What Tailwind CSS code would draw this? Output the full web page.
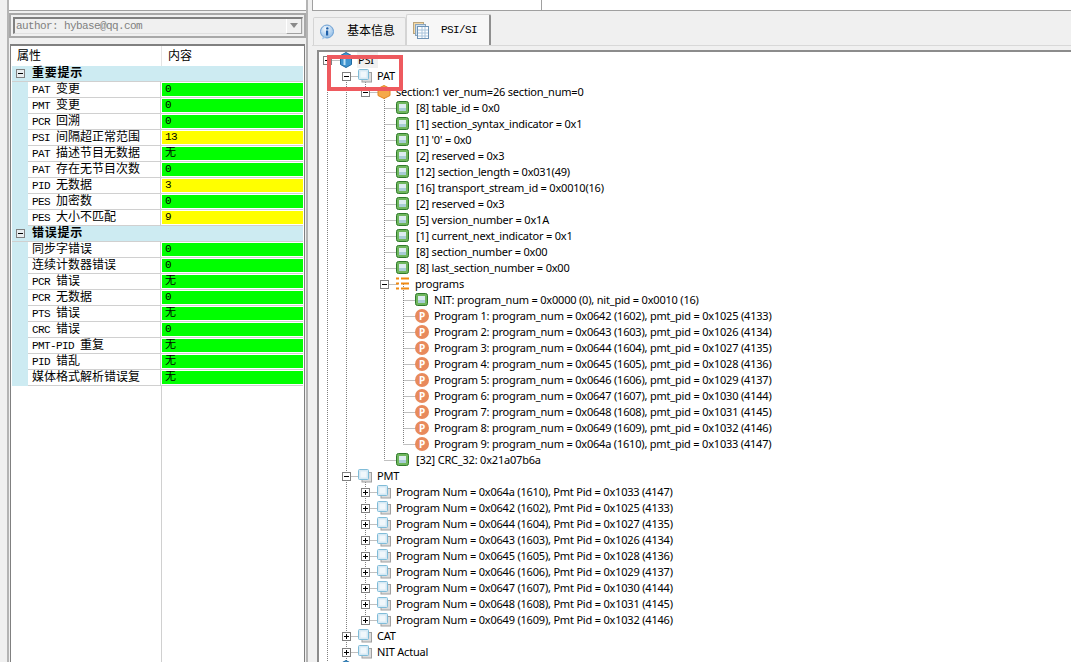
<!DOCTYPE html>
<html lang="zh">
<head>
    <meta charset="UTF-8">
    <title>PSI/SI</title>
    <script src="https://cdn.jsdelivr.net/npm/@tailwindcss/browser@4"></script>
</head>
<body class="bg-[#f0f0f0] overflow-hidden">
    <div class="flex w-[1071px] h-[662px] overflow-hidden font-['Liberation_Mono','Noto_Sans_CJK_SC',monospace] text-xs text-black">
        <!-- Left panel -->
        <aside class="ml-[7px] w-[301px] h-full flex flex-col border-x-2 border-[#b4b4b4]">
            <div class="h-[11px] bg-white border-b border-[#a0a0a0]"></div>
            <div class="mt-[2px] h-[25px] border-2 border-[#a8a8a8] p-[2px] pr-[1px]">
                <div class="flex h-[17px] items-center border border-t-2 border-l-2 border-[#808080] border-b-[#e0e0e0] border-r-[#e0e0e0] bg-[#f0f0f0] pl-[1px]">
                    <span class="flex-1 text-[11px] tracking-[-0.6px] text-[#808080]">author: hybase@qq.com</span>
                    <span class="flex items-center justify-center w-4 h-[15px] bg-[#f0f0f0] border-r border-b border-[#a0a0a0] border-l border-l-white">
                        <svg width="8" height="5" viewBox="0 0 8 5"><path d="M0 0h8L4 5z" fill="#8a8a8a"/></svg>
                    </span>
                </div>
            </div>
            <div class="mt-[6px] mx-[1px] flex-1 flex flex-col bg-white border-t-2 border-x border-[#808080] overflow-hidden">
                <div class="flex h-[20px] items-center">
                    <div class="w-[151px] pl-[6px] pt-[2px] h-full flex items-center border-r border-[#e4e4e4]">属性</div>
                    <div class="pl-[6px] pt-[2px]">内容</div>
                </div>
                <div id="props"></div>
                <div class="flex-1 ml-[150px] w-0 border-r border-[#d0d0d0]"></div>
            </div>
        </aside>

        <!-- Right panel -->
        <main class="ml-[4px] flex-1 flex flex-col min-w-0">
            <div class="h-[11px] flex bg-white border-b border-[#a0a0a0] border-l">
                <div class="w-[229px] border-r border-[#a0a0a0]"></div>
            </div>
            <div class="h-[34px] flex items-end pl-[1px]">
                <div class="flex items-center w-[93px] h-[28px] bg-[#f0f0f0] border border-b-0 border-[#d4d4d4] rounded-t-[2px] pl-[5px]">
                    <svg width="16" height="16" viewBox="0 0 16 16"><defs><radialGradient id="info" cx="0.4" cy="0.3" r="0.8"><stop offset="0" stop-color="#f2f8fd"/><stop offset="1" stop-color="#86b6e4"/></radialGradient></defs><circle cx="8" cy="7.5" r="6.5" fill="url(#info)" stroke="#6a9fd4"/><path d="M4 12.5l-1 3 4-2z" fill="#9cc3e8"/><circle cx="8.3" cy="4.4" r="1.2" fill="#1f5fa8"/><path d="M7 6.5h2.2v5H7z" fill="#1f5fa8"/></svg>
                    <span class="ml-[12px]">基本信息</span>
                </div>
                <div class="flex items-center w-[85px] h-[31px] bg-[#f7f7f7] border border-b-0 border-[#d4d4d4] border-r-2 border-r-[#8f8f8f] rounded-t-[2px] pl-[6px]">
                    <svg width="16" height="17" viewBox="0 0 16 17"><rect x="0.5" y="0.5" width="10" height="11" fill="#f6d9a6" stroke="#b9a47c"/><rect x="2.5" y="2.5" width="10" height="11" fill="#cfe2f2" stroke="#8aa5bd"/><rect x="4.5" y="4.5" width="11" height="12" fill="#fff" stroke="#6f93b5"/><path d="M5 8h10M5 11h10M5 14h10M9 5v11M12 5v11" stroke="#a9c4dc"/></svg>
                    <span class="ml-[12px] text-[11px] tracking-[-0.6px]">PSI/SI</span>
                </div>
            </div>
            <div class="flex-1 min-h-0 border-t border-[#d8d8d8] pl-[5px] pt-[4px]">
                <div id="tree" class="relative h-[620px] bg-white border-t-2 border-l-2 border-[#8c8c8c] font-['Noto_Sans','Noto_Sans_CJK_SC',sans-serif] text-[11px] tracking-[-0.2px] overflow-hidden">
                    <div class="absolute left-[38px] top-0 w-[21px] h-4 bg-[#f0f0f0]"></div>
                    <svg id="guides" class="absolute left-0 top-0" width="760" height="620"></svg>
                    <div id="rows" class="relative"></div>
                    <div class="absolute left-[8px] top-[3px] w-[76px] h-[36px] border-4 border-[#ee5a5f]"></div>
                </div>
            </div>
        </main>
    </div>

    <script>
        // left property table
        function label(s) {
            return s.split(/([\u4e00-\u9fa5]+)/).map(function (p) {
                return /[\u4e00-\u9fa5]/.test(p) ? '<span class="text-xs">' + p + '</span>' : '<span class="text-[11px] tracking-[-0.6px] whitespace-pre">' + p + '</span>';
            }).join('');
        }
        var props = [
            ['g', '重要提示'],
            ['PAT 变更', '0', 0], ['PMT 变更', '0', 0], ['PCR 回溯', '0', 0],
            ['PSI 间隔超正常范围', '13', 1], ['PAT 描述节目无数据', '无', 0], ['PAT 存在无节目次数', '0', 0],
            ['PID 无数据', '3', 1], ['PES 加密数', '0', 0], ['PES 大小不匹配', '9', 1],
            ['g', '错误提示'],
            ['同步字错误', '0', 0], ['连续计数器错误', '0', 0], ['PCR 错误', '无', 0], ['PCR 无数据', '0', 0],
            ['PTS 错误', '无', 0], ['CRC 错误', '0', 0], ['PMT-PID 重复', '无', 0], ['PID 错乱', '无', 0],
            ['媒体格式解析错误复', '无', 0]
        ];
        var minus = '<svg width="9" height="9" viewBox="0 0 9 9" class="shrink-0"><rect x="0.5" y="0.5" width="8" height="8" fill="#fff" stroke="#808080"/><path d="M2 4.5h5" stroke="#000"/></svg>';
        var plus = '<svg width="9" height="9" viewBox="0 0 9 9" class="shrink-0"><rect x="0.5" y="0.5" width="8" height="8" fill="#fff" stroke="#808080"/><path d="M2 4.5h5M4.5 2v5" stroke="#000"/></svg>';
        var html = '';
        props.forEach(function (p) {
            if (p[0] === 'g') {
                html += '<div class="flex items-center h-4 ml-[1px] mr-[1px] bg-[#cdebf2] border-b border-[#d0d0d0]"><span class="w-[20px] pl-[4px] flex">' + minus.replace('fill="#fff"', 'fill="#e8eef0"') + '</span><span class="font-bold tracking-[0.75px] pt-[1px]">' + p[1] + '</span></div>';
            } else {
                html += '<div class="flex h-4 ml-[1px] mr-[1px]"><div class="w-[16px] bg-[#cdebf2]"></div>' +
                    '<div class="w-[132px] pl-[4px] pt-[1px] flex items-center bg-white border-b border-[#d0d0d0]">' + label(p[0]) + '</div>' +
                    '<div class="flex-1 pl-[1px] pt-[1px] border-l border-b border-[#d0d0d0] bg-white"><div class="h-[13px] flex items-center pl-[3px] text-[11px] ' + (p[2] ? 'bg-[#ffff00] tracking-[-0.6px]' : 'bg-[#00ff00]') + '">' + p[1] + '</div></div></div>';
            }
        });
        document.getElementById('props').innerHTML = html;

        // tree icons
        var stack = '<svg width="14" height="14" viewBox="0 0 14 14"><rect x="4" y="3.5" width="9.5" height="9.5" fill="#dcdcdc" stroke="#a0a0a0"/><rect x="0.5" y="0.5" width="10" height="10" rx="1" fill="#d6e9f4" stroke="#80bcd8"/><rect x="2.5" y="2.5" width="6" height="6" fill="#f0f7fb"/></svg>';
        var leaf = '<svg width="14" height="14" viewBox="0 0 14 14"><rect x="0.5" y="0.5" width="12" height="12" rx="2" fill="#6fb65e" stroke="#2f7a2a"/><rect x="3" y="3" width="7" height="4" fill="#dcebf0"/><rect x="3" y="7" width="7" height="3" fill="#a9ccd6"/></svg>';
        var hexO = '<svg width="14" height="14" viewBox="0 0 14 14"><path d="M7 0.5l6 3v7l-6 3-6-3v-7z" fill="#f5a94a" stroke="#e2851f"/></svg>';
        var hexB = '<svg width="14" height="16" viewBox="0 0 14 16"><path d="M7 0.5l5.5 3v9l-5.5 3-5.5-3v-9z" fill="#3f94d0" stroke="#1f6aa0"/><path d="M5.5 3v10" stroke="#bde0f5" stroke-width="2"/></svg>';
        var list = '<svg width="14" height="14" viewBox="0 0 14 14"><path d="M0 1.5h3M5 1.5h8M0 6.5h3M5 6.5h8M0 11.5h3M5 11.5h8" stroke="#f08a12" stroke-width="2"/></svg>';
        var pIcon = '<span class="flex items-center justify-center w-[14px] h-[14px] rounded-full bg-[#e88a5c] text-white font-bold text-[10px] leading-none tracking-normal">P</span>';

        // [exp centre, expander, icon, text]
        var rows = [
            [327, plus, hexB, 'PSI'],
            [346, minus, stack, 'PAT'],
            [365, minus, hexO, 'section:1 ver_num=26 section_num=0']
        ];
        ['[8] table_id = 0x0', '[1] section_syntax_indicator = 0x1', "[1] '0' = 0x0", '[2] reserved = 0x3', '[12] section_length = 0x031(49)',
         '[16] transport_stream_id = 0x0010(16)', '[2] reserved = 0x3', '[5] version_number = 0x1A', '[1] current_next_indicator = 0x1',
         '[8] section_number = 0x00', '[8] last_section_number = 0x00'].forEach(function (t) { rows.push([384, '', leaf, t]); });
        rows.push([384, minus, list, 'programs']);
        rows.push([403, '', leaf, 'NIT: program_num = 0x0000 (0), nit_pid = 0x0010 (16)']);
        [['1', '0642', '1602', '1025', '4133'], ['2', '0643', '1603', '1026', '4134'], ['3', '0644', '1604', '1027', '4135'],
         ['4', '0645', '1605', '1028', '4136'], ['5', '0646', '1606', '1029', '4137'], ['6', '0647', '1607', '1030', '4144'],
         ['7', '0648', '1608', '1031', '4145'], ['8', '0649', '1609', '1032', '4146'], ['9', '064a', '1610', '1033', '4147']
        ].forEach(function (p) {
            rows.push([403, '', pIcon, 'Program ' + p[0] + ': program_num = 0x' + p[1] + ' (' + p[2] + '), pmt_pid = 0x' + p[3] + ' (' + p[4] + ')']);
        });
        rows.push([384, '', leaf, '[32] CRC_32: 0x21a07b6a']);
        rows.push([346, minus, stack, 'PMT']);
        [['064a', '1610', '1033', '4147'], ['0642', '1602', '1025', '4133'], ['0644', '1604', '1027', '4135'], ['0643', '1603', '1026', '4134'],
         ['0645', '1605', '1028', '4136'], ['0646', '1606', '1029', '4137'], ['0647', '1607', '1030', '4144'], ['0648', '1608', '1031', '4145'],
         ['0649', '1609', '1032', '4146']
        ].forEach(function (p) {
            rows.push([365, plus, stack, 'Program Num = 0x' + p[0] + ' (' + p[1] + '), Pmt Pid = 0x' + p[2] + ' (' + p[3] + ')']);
        });
        rows.push([346, plus, stack, 'CAT']);
        rows.push([346, plus, stack, 'NIT Actual']);
        rows.push([327, plus, hexB, '']);

        var treeHtml = '', lines = '';
        rows.forEach(function (r, i) {
            var x = r[0] - 319 - 4;
            // field rows sit one pixel further out than the programs row
            var gap = (r[0] === 384 && r[2] === leaf) ? 'ml-[6px]' : 'ml-[5px]';
            treeHtml += '<div class="flex items-center h-4 whitespace-pre" style="padding-left:' + x + 'px"><span class="w-[9px] flex shrink-0">' + r[1] + '</span>' +
                '<span class="ml-[7px] w-[14px] flex items-center justify-center shrink-0">' + r[2] + '</span><span class="' + gap + '">' + r[3] + '</span></div>';
            var y = i * 16 + 8.5;
            lines += '<path d="M' + (r[0] - 319 + 0.5) + ' ' + y + 'h13"/>';
        });
        // vertical connectors: [x on page, y from, y to]
        [[327, 60, 662], [346, 76, 662], [365, 76, 92], [365, 476, 620], [384, 92, 460], [403, 284, 444]].forEach(function (v) {
            lines += '<path d="M' + (v[0] - 319 + 0.5) + ' ' + (v[1] - 52) + 'V' + (v[2] - 52) + '"/>';
        });
        document.getElementById('guides').innerHTML = '<g fill="none" stroke="#808080" stroke-dasharray="1 1">' + lines + '</g>';
        document.getElementById('rows').innerHTML = treeHtml;
    </script>
</body>
</html>
